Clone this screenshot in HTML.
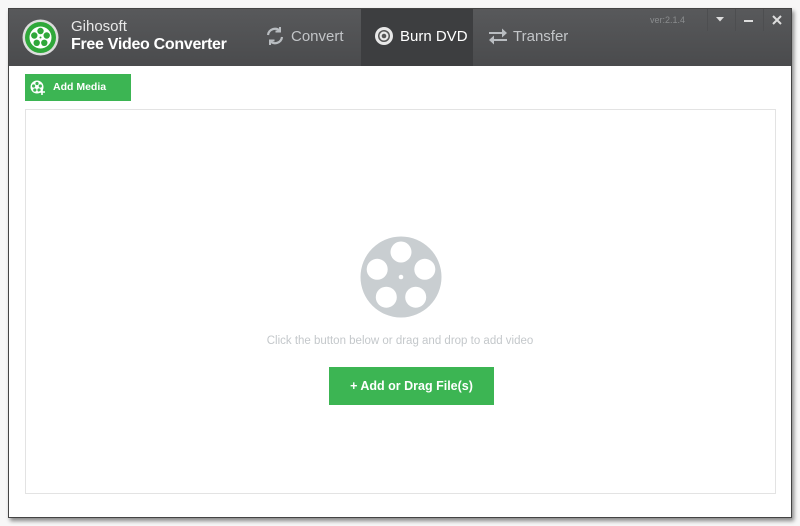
<!DOCTYPE html>
<html><head><meta charset="utf-8"><style>
*{margin:0;padding:0;box-sizing:border-box}
body{width:800px;height:526px;background:#f7f7f7;font-family:"Liberation Sans",sans-serif;position:relative;overflow:hidden}
.win{position:absolute;left:8px;top:8px;width:784px;height:510px;background:#fff;border:1px solid #444;box-shadow:2px 3px 4px rgba(0,0,0,.45)}
.hdr{position:absolute;left:0;top:0;width:782px;height:57px;background:linear-gradient(#58595b,#4a4b4d)}
.t1{position:absolute;left:62px;top:9px;color:#e8e8e8;font-size:15px}
.t2{position:absolute;left:62px;top:27px;color:#fff;font-size:16px;font-weight:bold;letter-spacing:-0.3px}
.tab{position:absolute;top:0;height:57px;color:#c2c5c8;font-size:15px;line-height:55px}
.tab.act{background:#3d3e40;color:#fff}
.ver{position:absolute;left:641px;top:6px;color:#8a8c8e;font-size:9px}
.sep{position:absolute;top:0;width:1px;height:22px;background:#4d4e50}
.addm{position:absolute;left:16px;top:65px;width:106px;height:27px;background:#3cb553;color:#fff;font-size:10.5px;font-weight:bold;line-height:27px;padding-left:28px}
.panel{position:absolute;left:16px;top:100px;width:751px;height:385px;border:1px solid #e3e3e3}
.hint{position:absolute;left:0;width:782px;top:326px;text-align:center;color:#c4c8cb;font-size:11.5px}
.btn{position:absolute;left:320px;top:358px;width:165px;height:38px;background:#3cb553;color:#fff;font-size:12.5px;font-weight:bold;text-align:center;line-height:38px}
</style></head><body>
<div class="win">
 <div class="hdr">
  <svg style="position:absolute;left:13px;top:10px" width="37" height="37" viewBox="0 0 37 37">
   <circle cx="18.5" cy="18.5" r="18" fill="#ddd"/><circle cx="18.5" cy="18.5" r="15.5" fill="#2fa83a"/>
   <circle cx="18.5" cy="18.5" r="11" fill="#fff"/>
   <g fill="#2fa83a"><circle cx="18.5" cy="12" r="3.2"/><circle cx="24.7" cy="16.5" r="3.2"/><circle cx="22.3" cy="23.8" r="3.2"/><circle cx="14.7" cy="23.8" r="3.2"/><circle cx="12.3" cy="16.5" r="3.2"/><circle cx="18.5" cy="18.5" r="1"/></g>
  </svg>
  <div class="t1">Gihosoft</div><div class="t2">Free Video Converter</div>
  <div class="tab" style="left:255px;width:96px">
   <svg style="position:absolute;left:1px;top:17px" width="20" height="20" viewBox="0 0 20 20" fill="none" stroke="#b9bdc1" stroke-width="2.2"><path d="M3 9a7 7 0 0 1 12-4"/><path d="M17 11a7 7 0 0 1-12 4"/><path d="M15 1v4.5h-4.5" stroke-width="2"/><path d="M5 19v-4.5h4.5" stroke-width="2"/></svg>
   <span style="position:absolute;left:27px">Convert</span></div>
  <div class="tab act" style="left:352px;width:112px">
   <svg style="position:absolute;left:13px;top:17px" width="20" height="20" viewBox="0 0 20 20"><circle cx="10" cy="10" r="9" fill="#e8e8e8"/><circle cx="10" cy="10" r="6" fill="#555"/><circle cx="10" cy="10" r="4.5" fill="#e8e8e8"/><circle cx="10" cy="10" r="2.3" fill="#555"/></svg>
   <span style="position:absolute;left:39px">Burn DVD</span></div>
  <div class="tab" style="left:478px;width:100px">
   <svg style="position:absolute;left:0;top:17px" width="22" height="20" viewBox="0 0 22 20" fill="#b9bdc1"><path d="M2 6h13V2.5L20 7l-5 4.5V8H2z"/><path d="M20 13H7v-3.5L2 14l5 4.5V15h13z"/></svg>
   <span style="position:absolute;left:26px">Transfer</span></div>
  <div class="ver">ver:2.1.4</div>
  <div class="sep" style="left:698px"></div><div class="sep" style="left:726px"></div><div class="sep" style="left:754px"></div>
  <svg style="position:absolute;left:707px;top:8px" width="8" height="5"><path d="M0 0h8L4 4.5z" fill="#ddd"/></svg>
  <div style="position:absolute;left:735px;top:11px;width:9px;height:2px;background:#ddd"></div>
  <svg style="position:absolute;left:763px;top:6px" width="10" height="10"><path d="M1 1l8 8M9 1l-8 8" stroke="#ddd" stroke-width="2"/></svg>
 </div>
 <div class="addm">
  <svg style="position:absolute;left:5px;top:6px" width="15" height="15" viewBox="0 0 15 15"><circle cx="7" cy="7" r="6.5" fill="#fff"/><g fill="#3cb553"><circle cx="7" cy="3.5" r="1.6"/><circle cx="10.3" cy="6" r="1.6"/><circle cx="9" cy="10" r="1.6"/><circle cx="4.8" cy="10" r="1.6"/><circle cx="3.6" cy="6" r="1.6"/></g><path d="M12 9v6M9 12h6" stroke="#fff" stroke-width="1.6"/></svg>
  Add Media</div>
 <div class="panel"></div>
 <svg style="position:absolute;left:351px;top:227px" width="82" height="82" viewBox="0 0 82 82">
  <circle cx="41" cy="41" r="40.5" fill="#c9ced1"/>
  <g fill="#fff"><circle cx="41" cy="16" r="10.5"/><circle cx="64.8" cy="33.3" r="10.5"/><circle cx="55.7" cy="61.2" r="10.5"/><circle cx="26.3" cy="61.2" r="10.5"/><circle cx="17.2" cy="33.3" r="10.5"/><circle cx="41" cy="41" r="2.3"/></g>
 </svg>
 <div class="hint">Click the button below or drag and drop to add video</div>
 <div class="btn">+ Add or Drag File(s)</div>
</div>
</body></html>
